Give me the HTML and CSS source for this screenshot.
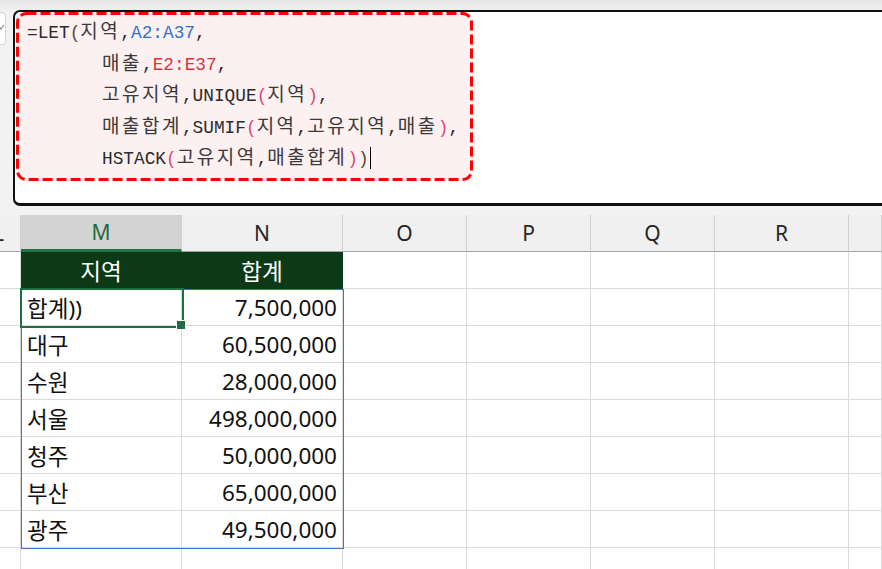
FILE: index.html
```html
<!DOCTYPE html>
<html lang="ko">
<head>
<meta charset="utf-8">
<title>LET formula</title>
<link rel="stylesheet" href="styles.css">
</head>
<body>
<div class="fbar">
  <div class="namebox">
    <svg width="6" height="33" viewBox="0 0 6 33"><path d="M-3 13 L1 17 L4 13" fill="none" stroke="#8a8a8a" stroke-width="1.2"/></svg>
  </div>
  <div class="formula">
    <div class="dash">
      <svg class="dashline" width="457" height="169" viewBox="0 0 457 169"><rect x="1.5" y="1.5" width="454" height="166" rx="9" ry="9" fill="none" stroke="#ff0000" stroke-width="3" stroke-dasharray="10 4"/></svg>
      <div class="ln">=LET<span class="p1">(</span><span class="k">지역</span>,<span class="rb">A2:A37</span>,</div>
      <div class="ln ind"><span class="k">매출</span>,<span class="rr">E2:E37</span>,</div>
      <div class="ln ind"><span class="k">고유지역</span>,UNIQUE<span class="p2">(</span><span class="k">지역</span><span class="p2">)</span>,</div>
      <div class="ln ind"><span class="k">매출합계</span>,SUMIF<span class="p2">(</span><span class="k">지역</span>,<span class="k">고유지역</span>,<span class="k">매출</span><span class="p2">)</span>,</div>
      <div class="ln ind">HSTACK<span class="p2">(</span><span class="k">고유지역</span>,<span class="k">매출합계</span><span class="p2">)</span><span class="p1">)</span><span class="caret"></span></div>
    </div>
  </div>
</div>
<div class="sheet">
  <div class="hd lcol">L</div>
  <div class="hd sel">M</div>
  <div class="hd">N</div>
  <div class="hd">O</div>
  <div class="hd">P</div>
  <div class="hd">Q</div>
  <div class="hd">R</div>
  <div class="hd"></div>

  <div class="c"></div><div class="c th">지역</div><div class="c th">합계</div><div class="c"></div><div class="c"></div><div class="c"></div><div class="c"></div><div class="c"></div>

  <div class="c"></div><div class="c t">합계))</div><div class="c n">7,500,000</div><div class="c"></div><div class="c"></div><div class="c"></div><div class="c"></div><div class="c"></div>
  <div class="c"></div><div class="c t">대구</div><div class="c n">60,500,000</div><div class="c"></div><div class="c"></div><div class="c"></div><div class="c"></div><div class="c"></div>
  <div class="c"></div><div class="c t">수원</div><div class="c n">28,000,000</div><div class="c"></div><div class="c"></div><div class="c"></div><div class="c"></div><div class="c"></div>
  <div class="c"></div><div class="c t">서울</div><div class="c n">498,000,000</div><div class="c"></div><div class="c"></div><div class="c"></div><div class="c"></div><div class="c"></div>
  <div class="c"></div><div class="c t">청주</div><div class="c n">50,000,000</div><div class="c"></div><div class="c"></div><div class="c"></div><div class="c"></div><div class="c"></div>
  <div class="c"></div><div class="c t">부산</div><div class="c n">65,000,000</div><div class="c"></div><div class="c"></div><div class="c"></div><div class="c"></div><div class="c"></div>
  <div class="c"></div><div class="c t">광주</div><div class="c n">49,500,000</div><div class="c"></div><div class="c"></div><div class="c"></div><div class="c"></div><div class="c"></div>
  <div class="c"></div><div class="c"></div><div class="c"></div><div class="c"></div><div class="c"></div><div class="c"></div><div class="c"></div><div class="c"></div>

  <div class="spill"></div>
  <div class="active"></div>
</div>
</body>
</html>
```
FILE: styles.css
```css
* { box-sizing: border-box; }
html, body {
  margin: 0;
  padding: 0;
}
body {
  width: 882px;
  height: 569px;
  overflow: hidden;
  background: #f2f2f2;
  font-family: "Noto Sans", "Noto Sans CJK KR", sans-serif;
}
.fbar {
  display: flex;
  align-items: flex-start;
  padding-top: 10px;
  height: 206px;
  background: linear-gradient(#e6e6e6 0, #efefef 10px, #f2f2f2 10px);
}
.namebox {
  width: 6px;
  height: 33px;
  margin-top: 2px;
  background: #fff;
  border: 1px solid #d4d4d4;
  border-left: none;
  border-radius: 0 4px 4px 0;
  overflow: hidden;
}
.namebox svg { display: block; margin-top: -1px; }
.formula {
  margin-left: 7px;
  flex: 1;
  height: 196px;
  background: #fff;
  border: 2px solid #111;
  border-right: none;
  border-bottom-width: 3px;
  border-radius: 7px 0 0 7px;
}
.dash {
  position: relative;
  margin-left: 1px;
  width: 457px;
  height: 169px;
  border-radius: 10px;
  background: #fdf0f0;
  padding: 6px 0 0 11px;
  font-family: "Liberation Mono", "Noto Sans CJK KR", monospace;
  font-size: 17.8px;
  color: #2b2b2b;
}
.dashline {
  position: absolute;
  left: 0;
  top: 0;
  pointer-events: none;
}
.ln {
  height: 31.5px;
  line-height: 31.5px;
  white-space: pre;
}
.ind { padding-left: 75px; }
.k {
  font-family: "Noto Sans CJK KR", sans-serif;
  font-size: 19px;
  letter-spacing: 2.5px;
  line-height: 1;
  color: #3a3a3a;
}
.rb { color: #2f74c9; }
.rr { color: #d6353c; }
.p1 { color: #5c4433; }
.p2 { color: #d9487a; }
.caret {
  display: inline-block;
  width: 1px;
  height: 22px;
  margin-left: 1px;
  background: #000;
  vertical-align: -5px;
}

.sheet {
  margin-top: 9px;
  display: grid;
  grid-template-columns: 21px 161px 161px 124px 124px 124px 134px 33px;
  grid-auto-rows: 37px;
  position: relative;
  background: #fff;
}
.hd {
  background: #f0f0f0;
  border-right: 1px solid #d0d0d0;
  border-bottom: 1px solid #a3a3a3;
  font-size: 21px;
  color: #262626;
  display: flex;
  align-items: center;
  justify-content: center;
}
.hd.lcol {
  justify-content: flex-start;
  text-indent: -7px;
  overflow: hidden;
}
.hd.sel {
  background: #d3d3d3;
  color: #1e6b41;
  border-bottom: 3px solid #217346;
}
.c {
  border-right: 1px solid #dadada;
  border-bottom: 1px solid #dadada;
  font-size: 22.5px;
  color: #111;
  display: flex;
  align-items: center;
  white-space: nowrap;
}
.c.th {
  background: #0d3a16;
  border-right-color: #0d3a16;
  border-bottom-color: #0d3a16;
  color: #fff;
  justify-content: center;
}
.c.t { padding-left: 6px; }
.c.n {
  justify-content: flex-end;
  padding-right: 5px;
}
.spill {
  position: absolute;
  left: 21px;
  top: 74px;
  width: 323px;
  height: 260px;
  border: 1px solid #4472c4;
  pointer-events: none;
}
.active {
  position: absolute;
  left: 20px;
  top: 73px;
  width: 164px;
  height: 40px;
  border: 2px solid #1d6f42;
  pointer-events: none;
}
.active::after {
  content: "";
  position: absolute;
  right: -4px;
  bottom: -4px;
  width: 8px;
  height: 8px;
  background: #1d6f42;
  border: 1px solid #fff;
}
```
